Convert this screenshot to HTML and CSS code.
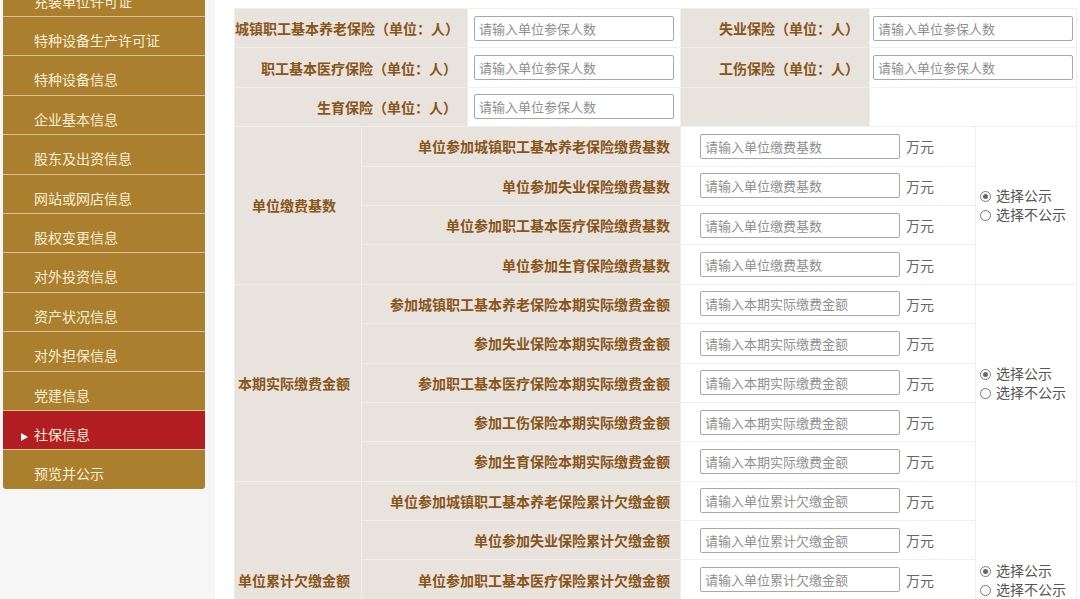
FILE: index.html
```html
<!DOCTYPE html>
<html lang="zh-CN">

<head>
    <meta charset="UTF-8">
    <meta name="viewport" content="width=device-width, initial-scale=1.0">
    <title>社保信息</title>
    <link rel="stylesheet" href="styles.css">
</head>

<body>
    <div class="layout">
        <aside class="side">
            <ul class="menu">
                <li><a href="#">充装单位许可证</a></li>
                <li><a href="#">特种设备生产许可证</a></li>
                <li><a href="#">特种设备信息</a></li>
                <li><a href="#">企业基本信息</a></li>
                <li><a href="#">股东及出资信息</a></li>
                <li><a href="#">网站或网店信息</a></li>
                <li><a href="#">股权变更信息</a></li>
                <li><a href="#">对外投资信息</a></li>
                <li><a href="#">资产状况信息</a></li>
                <li><a href="#">对外担保信息</a></li>
                <li><a href="#">党建信息</a></li>
                <li class="active"><a href="#">社保信息</a></li>
                <li class="last"><a href="#">预览并公示</a></li>
            </ul>
        </aside>

        <main class="content">
            <table class="form">
                <colgroup>
                    <col class="c1">
                    <col class="c2">
                    <col class="c3">
                    <col class="c4">
                    <col class="c5">
                    <col class="c6">
                </colgroup>

                <!-- 参保人数 -->
                <tr>
                    <th colspan="2" class="lbl">城镇职工基本养老保险（单位：人）</th>
                    <td class="inp"><input type="text" placeholder="请输入单位参保人数"></td>
                    <th class="lbl">失业保险（单位：人）</th>
                    <td colspan="2" class="inp"><input type="text" placeholder="请输入单位参保人数"></td>
                </tr>
                <tr>
                    <th colspan="2" class="lbl">职工基本医疗保险（单位：人）</th>
                    <td class="inp"><input type="text" placeholder="请输入单位参保人数"></td>
                    <th class="lbl">工伤保险（单位：人）</th>
                    <td colspan="2" class="inp"><input type="text" placeholder="请输入单位参保人数"></td>
                </tr>
                <tr>
                    <th colspan="2" class="lbl">生育保险（单位：人）</th>
                    <td class="inp"><input type="text" placeholder="请输入单位参保人数"></td>
                    <th class="lbl"></th>
                    <td colspan="2"></td>
                </tr>

                <!-- 单位缴费基数 -->
                <tr>
                    <th rowspan="4" class="grp">单位缴费基数</th>
                    <th colspan="2" class="lbl">单位参加城镇职工基本养老保险缴费基数</th>
                    <td colspan="2" class="amt"><input type="text" placeholder="请输入单位缴费基数"><span>万元</span></td>
                    <td rowspan="4" class="pub">
                        <label class="opt"><i class="dot on"></i>选择公示</label>
                        <label class="opt"><i class="dot"></i>选择不公示</label>
                    </td>
                </tr>
                <tr>
                    <th colspan="2" class="lbl">单位参加失业保险缴费基数</th>
                    <td colspan="2" class="amt"><input type="text" placeholder="请输入单位缴费基数"><span>万元</span></td>
                </tr>
                <tr>
                    <th colspan="2" class="lbl">单位参加职工基本医疗保险缴费基数</th>
                    <td colspan="2" class="amt"><input type="text" placeholder="请输入单位缴费基数"><span>万元</span></td>
                </tr>
                <tr>
                    <th colspan="2" class="lbl">单位参加生育保险缴费基数</th>
                    <td colspan="2" class="amt"><input type="text" placeholder="请输入单位缴费基数"><span>万元</span></td>
                </tr>

                <!-- 本期实际缴费金额 -->
                <tr>
                    <th rowspan="5" class="grp">本期实际缴费金额</th>
                    <th colspan="2" class="lbl">参加城镇职工基本养老保险本期实际缴费金额</th>
                    <td colspan="2" class="amt"><input type="text" placeholder="请输入本期实际缴费金额"><span>万元</span></td>
                    <td rowspan="5" class="pub">
                        <label class="opt"><i class="dot on"></i>选择公示</label>
                        <label class="opt"><i class="dot"></i>选择不公示</label>
                    </td>
                </tr>
                <tr>
                    <th colspan="2" class="lbl">参加失业保险本期实际缴费金额</th>
                    <td colspan="2" class="amt"><input type="text" placeholder="请输入本期实际缴费金额"><span>万元</span></td>
                </tr>
                <tr>
                    <th colspan="2" class="lbl">参加职工基本医疗保险本期实际缴费金额</th>
                    <td colspan="2" class="amt"><input type="text" placeholder="请输入本期实际缴费金额"><span>万元</span></td>
                </tr>
                <tr>
                    <th colspan="2" class="lbl">参加工伤保险本期实际缴费金额</th>
                    <td colspan="2" class="amt"><input type="text" placeholder="请输入本期实际缴费金额"><span>万元</span></td>
                </tr>
                <tr>
                    <th colspan="2" class="lbl">参加生育保险本期实际缴费金额</th>
                    <td colspan="2" class="amt"><input type="text" placeholder="请输入本期实际缴费金额"><span>万元</span></td>
                </tr>

                <!-- 单位累计欠缴金额 -->
                <tr>
                    <th rowspan="5" class="grp">单位累计欠缴金额</th>
                    <th colspan="2" class="lbl">单位参加城镇职工基本养老保险累计欠缴金额</th>
                    <td colspan="2" class="amt"><input type="text" placeholder="请输入单位累计欠缴金额"><span>万元</span></td>
                    <td rowspan="5" class="pub">
                        <label class="opt"><i class="dot on"></i>选择公示</label>
                        <label class="opt"><i class="dot"></i>选择不公示</label>
                    </td>
                </tr>
                <tr>
                    <th colspan="2" class="lbl">单位参加失业保险累计欠缴金额</th>
                    <td colspan="2" class="amt"><input type="text" placeholder="请输入单位累计欠缴金额"><span>万元</span></td>
                </tr>
                <tr>
                    <th colspan="2" class="lbl">单位参加职工基本医疗保险累计欠缴金额</th>
                    <td colspan="2" class="amt"><input type="text" placeholder="请输入单位累计欠缴金额"><span>万元</span></td>
                </tr>
                <tr>
                    <th colspan="2" class="lbl">单位参加工伤保险累计欠缴金额</th>
                    <td colspan="2" class="amt"><input type="text" placeholder="请输入单位累计欠缴金额"><span>万元</span></td>
                </tr>
                <tr>
                    <th colspan="2" class="lbl">单位参加生育保险累计欠缴金额</th>
                    <td colspan="2" class="amt"><input type="text" placeholder="请输入单位累计欠缴金额"><span>万元</span></td>
                </tr>
            </table>
        </main>
    </div>
</body>

</html>
```

FILE: styles.css
```css
html,
body {
    margin: 0;
    height: 100%;
    overflow: hidden;
}

body {
    font-family: "Microsoft YaHei", "Noto Sans CJK SC", sans-serif;
    font-size: 14px;
    background: #fff;
}

.layout {
    display: flex;
    height: 100%;
}

/* left menu */
.side {
    width: 215px;
    flex-shrink: 0;
    background: #f6f6f6;
}

.menu {
    list-style: none;
    margin: -22.4px 0 0 3px;
    padding: 0;
    width: 202px;
}

.menu li {
    background: #aa802e;
    border-bottom: 1px solid #d8c394;
}

.menu a {
    display: block;
    padding-top: 9px;
    line-height: 29.4px;
    padding-left: 31px;
    color: #f9eed4;
    text-decoration: none;
    font-size: 14px;
}

.menu li.active {
    background: #b21e22;
}

.menu li.active a::before {
    content: "";
    display: inline-block;
    border-left: 7px solid #fff;
    border-top: 4.5px solid transparent;
    border-bottom: 4.5px solid transparent;
    margin-left: -13px;
    margin-right: 6px;
    vertical-align: -1px;
}

.menu li.last {
    border-bottom: none;
    border-radius: 0 0 3px 3px;
}

/* main form */
.content {
    flex: 1;
    padding: 8px 0 0 19px;
}

.form {
    border-collapse: collapse;
    table-layout: fixed;
    width: 842px;
}

.c1 { width: 127px; }
.c2 { width: 106px; }
.c3 { width: 213px; }
.c4 { width: 189px; }
.c5 { width: 106px; }
.c6 { width: 101px; }

.form th,
.form td {
    height: 39.4px;
    padding: 0;
    border: 1px solid #f1eeea;
    box-sizing: border-box;
}

.form th {
    background: #e9e3dd;
    color: #87551a;
    font-weight: bold;
    font-size: 14px;
}

.form th.lbl {
    text-align: right;
    padding-right: 10px;
}

.form th.grp {
    text-align: center;
    padding-right: 8px;
}

.form td {
    background: #fff;
    border-color: #efefef;
}

.form td.inp {
    text-align: center;
}

.form td.amt {
    padding-left: 19px;
}

.form input {
    box-sizing: border-box;
    width: 200px;
    height: 25px;
    padding: 0 4px;
    border: 1px solid #a8a8a8;
    border-radius: 2px;
    font-family: inherit;
    font-size: 13px;
    color: #333;
    vertical-align: middle;
}

.form input::placeholder {
    color: #8f8f8f;
}

.amt span {
    margin-left: 6px;
    color: #666;
    font-size: 14px;
    vertical-align: middle;
}

.pub {
    padding-left: 4px !important;
    color: #555;
    font-size: 14px;
}

.opt {
    display: block;
    line-height: 19px;
}

.dot {
    display: inline-block;
    box-sizing: border-box;
    width: 11px;
    height: 11px;
    border: 1px solid #777;
    border-radius: 50%;
    margin-right: 5px;
    vertical-align: -1px;
    position: relative;
}

.dot.on::after {
    content: "";
    position: absolute;
    left: 2px;
    top: 2px;
    width: 5px;
    height: 5px;
    border-radius: 50%;
    background: #666;
}
```
